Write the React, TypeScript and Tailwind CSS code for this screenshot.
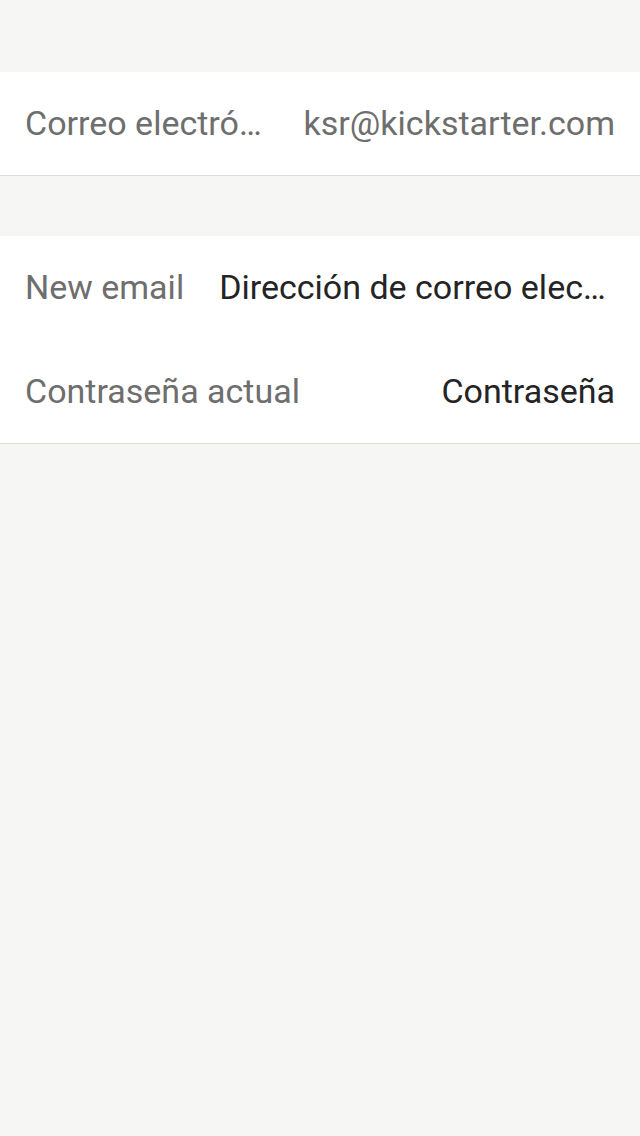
const font = { fontFamily: 'Roboto, "Noto Sans", sans-serif' };

// keep: which side keeps its full text when the row runs out of room
function Row({
  label,
  value,
  dark,
  tall,
  keep,
}: {
  label: string;
  value: string;
  dark?: boolean;
  tall?: boolean;
  keep: 'label' | 'value';
}) {
  return (
    <div className={`flex items-center px-[25px] gap-[35px] ${tall ? 'h-[104px]' : 'h-[103px]'}`}>
      <div
        className={`truncate text-[34px] text-[#6d6e6d] ${keep === 'label' ? 'shrink-0' : 'flex-1 min-w-0'}`}
      >
        {label}
      </div>
      <div
        className={`truncate text-right text-[34px] ${dark ? 'text-[#242424]' : 'text-[#6d6e6d]'} ${
          keep === 'value' ? 'shrink-0' : 'flex-1 min-w-0'
        }`}
      >
        {value}
      </div>
    </div>
  );
}

export default function App() {
  return (
    <main className="min-h-[1136px] bg-[#f6f6f4]" style={font}>
      <div className="pt-[72px]">
        <section className="bg-white border-b border-[#dcdcdc]">
          <Row label="Correo electrónico" value="ksr@kickstarter.com" keep="value" />
        </section>
      </div>
      <div className="pt-[60px]">
        <section className="bg-white border-b border-[#dcdcdc]">
          <Row label="New email" value="Dirección de correo electrónico" dark keep="label" />
          <Row label="Contraseña actual" value="Contraseña" dark tall keep="label" />
        </section>
      </div>
    </main>
  );
}
